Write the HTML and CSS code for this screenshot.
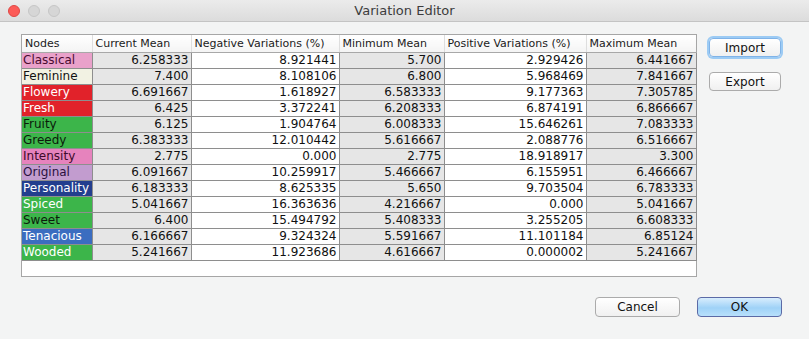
FILE: index.html
```html
<!doctype html>
<html lang="en">
<head>
    <meta charset="utf-8" />
    <title>Variation Editor</title>
    <link rel="stylesheet" href="styles.css">
</head>
<body>
    <div class="window">
        <!-- Title bar -->
        <div class="titlebar">
            <div class="lights">
                <span class="light close"></span>
                <span class="light"></span>
                <span class="light"></span>
            </div>
            <div class="title">Variation Editor</div>
        </div>

        <div class="content">
            <div class="scroll-pane">
                <table class="grid">
                    <thead>
                        <tr>
                            <th class="c-node">Nodes</th>
                            <th class="c-cur">Current Mean</th>
                            <th class="c-neg">Negative Variations (%)</th>
                            <th class="c-min">Minimum Mean</th>
                            <th class="c-pos">Positive Variations (%)</th>
                            <th class="c-max">Maximum Mean</th>
                        </tr>
                    </thead>
                    <tbody>
                        <tr><td class="node classical">Classical</td><td class="num gray">6.258333</td><td class="num">8.921441</td><td class="num gray">5.700</td><td class="num">2.929426</td><td class="num gray">6.441667</td></tr>
                        <tr><td class="node feminine">Feminine</td><td class="num gray">7.400</td><td class="num">8.108106</td><td class="num gray">6.800</td><td class="num">5.968469</td><td class="num gray">7.841667</td></tr>
                        <tr><td class="node flowery">Flowery</td><td class="num gray">6.691667</td><td class="num">1.618927</td><td class="num gray">6.583333</td><td class="num">9.177363</td><td class="num gray">7.305785</td></tr>
                        <tr><td class="node fresh">Fresh</td><td class="num gray">6.425</td><td class="num">3.372241</td><td class="num gray">6.208333</td><td class="num">6.874191</td><td class="num gray">6.866667</td></tr>
                        <tr><td class="node fruity">Fruity</td><td class="num gray">6.125</td><td class="num">1.904764</td><td class="num gray">6.008333</td><td class="num">15.646261</td><td class="num gray">7.083333</td></tr>
                        <tr><td class="node greedy">Greedy</td><td class="num gray">6.383333</td><td class="num">12.010442</td><td class="num gray">5.616667</td><td class="num">2.088776</td><td class="num gray">6.516667</td></tr>
                        <tr><td class="node intensity">Intensity</td><td class="num gray">2.775</td><td class="num">0.000</td><td class="num gray">2.775</td><td class="num">18.918917</td><td class="num gray">3.300</td></tr>
                        <tr><td class="node original">Original</td><td class="num gray">6.091667</td><td class="num">10.259917</td><td class="num gray">5.466667</td><td class="num">6.155951</td><td class="num gray">6.466667</td></tr>
                        <tr><td class="node personality">Personality</td><td class="num gray">6.183333</td><td class="num">8.625335</td><td class="num gray">5.650</td><td class="num">9.703504</td><td class="num gray">6.783333</td></tr>
                        <tr><td class="node spiced">Spiced</td><td class="num gray">5.041667</td><td class="num">16.363636</td><td class="num gray">4.216667</td><td class="num">0.000</td><td class="num gray">5.041667</td></tr>
                        <tr><td class="node sweet">Sweet</td><td class="num gray">6.400</td><td class="num">15.494792</td><td class="num gray">5.408333</td><td class="num">3.255205</td><td class="num gray">6.608333</td></tr>
                        <tr><td class="node tenacious">Tenacious</td><td class="num gray">6.166667</td><td class="num">9.324324</td><td class="num gray">5.591667</td><td class="num">11.101184</td><td class="num gray">6.85124</td></tr>
                        <tr><td class="node wooded">Wooded</td><td class="num gray">5.241667</td><td class="num">11.923686</td><td class="num gray">4.616667</td><td class="num">0.000002</td><td class="num gray">5.241667</td></tr>
                    </tbody>
                </table>
            </div>

            <div class="side-buttons">
                <button class="btn focused">Import</button>
                <button class="btn">Export</button>
            </div>
        </div>

        <div class="footer">
            <button class="btn wide">Cancel</button>
            <button class="btn wide default">OK</button>
        </div>
    </div>
</body>
</html>
```

FILE: styles.css
```css
body {
    margin: 0;
    font-family: "DejaVu Sans", "Liberation Sans", sans-serif;
    background: #f3f4f4;
}
.window {
    width: 809px;
    height: 339px;
    background: #f3f4f4;
}
.titlebar {
    height: 22px;
    display: flex;
    align-items: center;
    position: relative;
    background: linear-gradient(#ebebeb, #dcdcdc);
    border-bottom: 1px solid #c4c4c4;
    box-sizing: border-box;
}
.lights {
    display: flex;
    gap: 8px;
    padding-left: 8px;
}
.light {
    width: 12px;
    height: 12px;
    border-radius: 50%;
    background: #d6d6d6;
    border: 1px solid #c6c6c6;
    box-sizing: border-box;
}
.light.close {
    background: #fc5b57;
    border-color: #df4744;
}
.title {
    position: absolute;
    left: 0;
    right: 0;
    text-align: center;
    font-size: 13px;
    color: #3c3c3c;
}
.content {
    display: flex;
    padding: 12px 0 0 21px;
}
.scroll-pane {
    width: 676px;
    height: 243px;
    border: 1px solid #a6a6a6;
    background: white;
    box-sizing: border-box;
}
.grid {
    border-collapse: collapse;
    table-layout: fixed;
    width: 674px;
    font-size: 12px;
}
.grid th {
    height: 17px;
    padding: 0 3px;
    font-size: 11px;
    font-weight: normal;
    text-align: left;
    color: #1a1a1a;
    background: linear-gradient(#ffffff, #f4f4f4);
    border-bottom: 1px solid #a8a8a8;
    border-left: 1px solid #dedede;
    box-sizing: border-box;
    white-space: nowrap;
}
.grid th:first-child {
    border-left: none;
}
.c-node { width: 70px; }
.c-cur { width: 99px; }
.c-neg { width: 148px; }
.c-min { width: 105px; }
.c-pos { width: 142px; }
.c-max { width: 110px; }
.grid td {
    height: 16px;
    padding: 0 2px;
    border: 1px solid #8e8e8e;
    box-sizing: border-box;
    line-height: 14px;
    white-space: nowrap;
    overflow: hidden;
    color: #111;
}
.grid td:first-child {
    border-left: none;
}
.grid .num {
    text-align: right;
}
.grid .gray {
    background: #e6e6e6;
}
.grid .node {
    padding-left: 1px;
    font-size: 12px;
}
.grid .classical { background: #e9a1ca; color: #4a0b30; }
.grid .feminine { background: #f2f2e3; color: #111; }
.grid .flowery { background: #e1222a; color: #fff; }
.grid .fresh { background: #e1222a; color: #fff; }
.grid .fruity { background: #3cb54a; color: #0b1a0b; }
.grid .greedy { background: #3cb54a; color: #0b1a0b; }
.grid .intensity { background: #e683bd; color: #3d0a2a; }
.grid .original { background: #c29ccf; color: #2a1040; }
.grid .personality { background: #233e8e; color: #fff; }
.grid .spiced { background: #3cb54a; color: #fff; }
.grid .sweet { background: #3cb54a; color: #0b1a0b; }
.grid .tenacious { background: #3b6dc0; color: #fff; }
.grid .wooded { background: #3cb54a; color: #fff; }
.side-buttons {
    display: flex;
    flex-direction: column;
    gap: 15px;
    padding: 4px 0 0 12px;
}
.btn {
    width: 72px;
    height: 19px;
    padding: 0;
    font-family: "DejaVu Sans", "Liberation Sans", sans-serif;
    font-size: 12px;
    color: #111;
    background: linear-gradient(#ffffff, #f0f0f0);
    border: 1px solid #ababab;
    border-radius: 4px;
}
.btn.focused {
    box-shadow: 0 0 0 2px #9ccbf4;
    border-color: #7fb3e8;
}
.footer {
    display: flex;
    gap: 17px;
    padding: 20px 0 0 595px;
}
.btn.wide {
    width: 85px;
    height: 20px;
}
.btn.default {
    background: linear-gradient(#d8edfd, #9fd2f7 55%, #b8e0fb);
    border-color: #5b6aa6;
}
```
